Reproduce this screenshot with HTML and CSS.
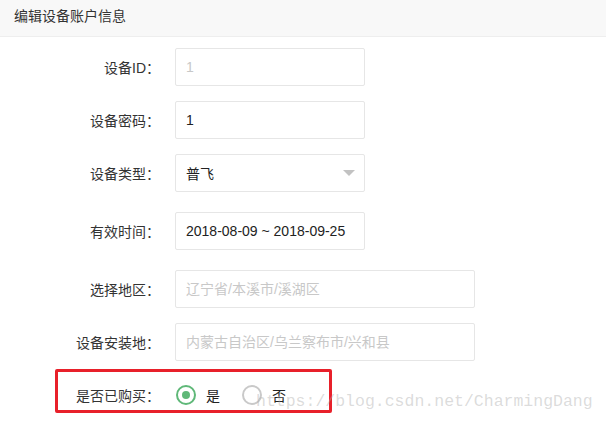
FILE: index.html
```html
<!DOCTYPE html>
<html lang="zh-CN">
<head>
<meta charset="utf-8">
<title>编辑设备账户信息</title>
<link rel="stylesheet" href="styles.css">
</head>
<body>
<div class="page">
  <div class="header">编辑设备账户信息</div>
  <form class="form">
    <div class="item">
      <label class="label">设备ID<span class="colon">：</span></label>
      <div class="field"><input class="input disabled" type="text" value="1" readonly></div>
    </div>
    <div class="item">
      <label class="label">设备密码<span class="colon">：</span></label>
      <div class="field"><input class="input" type="text" value="1"></div>
    </div>
    <div class="item item-lg">
      <label class="label">设备类型<span class="colon">：</span></label>
      <div class="field">
        <div class="input select">
          <span>普飞</span>
          <span class="caret"></span>
        </div>
      </div>
    </div>
    <div class="item item-lg">
      <label class="label">有效时间<span class="colon">：</span></label>
      <div class="field"><input class="input" type="text" value="2018-08-09 ~ 2018-09-25"></div>
    </div>
    <div class="item">
      <label class="label">选择地区<span class="colon">：</span></label>
      <div class="field"><input class="input wide" type="text" placeholder="辽宁省/本溪市/溪湖区"></div>
    </div>
    <div class="item">
      <label class="label">设备安装地<span class="colon">：</span></label>
      <div class="field"><input class="input wide" type="text" placeholder="内蒙古自治区/乌兰察布市/兴和县"></div>
    </div>
    <div class="item item-radio">
      <label class="label">是否已购买<span class="colon">：</span></label>
      <div class="field radios">
        <span class="radio checked"><span class="ring"></span><span class="rtext">是</span></span>
        <span class="radio"><span class="ring"></span><span class="rtext">否</span></span>
      </div>
      <div class="highlight"></div>
    </div>
  </form>
  <div class="watermark">https://blog.csdn.net/CharmingDang</div>
</div>
</body>
</html>
```
FILE: styles.css
```css
html, body {
  margin: 0;
  padding: 0;
  background: #fff;
}
body {
  font-family: "Liberation Sans", "Noto Sans CJK SC", sans-serif;
  font-size: 14px;
  color: #333;
}
.page {
  position: relative;
  width: 606px;
  height: 423px;
  overflow: hidden;
}
.header {
  height: 36px;
  line-height: 32px;
  padding: 0 14px;
  background: #f8f8f8;
  border-bottom: 1px solid #eeeeee;
  color: #333;
}
.form {
  margin: 0;
  padding-top: 11px;
}
.item {
  display: flex;
  align-items: center;
  height: 38px;
  margin-bottom: 15px;
}
.item-lg {
  margin-bottom: 20px;
}
.item-radio {
  position: relative;
}
.label {
  width: 160px;
  text-align: right;
  line-height: 20px;
  color: #333;
}
.colon {
  font-family: "Noto Sans CJK JP", "Noto Sans CJK SC", sans-serif;
}
.field {
  margin-left: 15px;
  display: flex;
  align-items: center;
}
.input {
  box-sizing: border-box;
  width: 190px;
  height: 38px;
  margin: 0;
  padding: 0 10px;
  border: 1px solid #e6e6e6;
  border-radius: 2px;
  background: #fff;
  font-family: "Liberation Sans", "Noto Sans CJK SC", sans-serif;
  font-size: 14px;
  color: #222;
  outline: none;
}
.input.wide {
  width: 300px;
}
.input.disabled {
  color: #c8c8c8;
}
.input::placeholder {
  color: #c8c8c8;
}
.select {
  display: flex;
  align-items: center;
  justify-content: space-between;
  padding-right: 9px;
}
.caret {
  width: 0;
  height: 0;
  border-left: 6px solid transparent;
  border-right: 6px solid transparent;
  border-top: 6px solid #c2c2c2;
}
.radios {
  padding-left: 1px;
}
.radio {
  display: inline-flex;
  align-items: center;
  margin-right: 22px;
}
.ring {
  box-sizing: border-box;
  width: 20px;
  height: 20px;
  border: 2px solid #c9c9c9;
  border-radius: 50%;
  display: flex;
  align-items: center;
  justify-content: center;
}
.radio.checked .ring {
  border-color: #5fb878;
}
.radio.checked .ring::after {
  content: "";
  width: 8px;
  height: 8px;
  border-radius: 50%;
  background: #5fb878;
}
.rtext {
  margin-left: 10px;
  color: #222;
}
.highlight {
  position: absolute;
  left: 55px;
  top: -7px;
  width: 277px;
  height: 44px;
  box-sizing: border-box;
  border: 3px solid #e8202a;
  border-radius: 2px;
  pointer-events: none;
}
.watermark {
  position: absolute;
  left: 256px;
  top: 393px;
  font-family: "Liberation Mono", monospace;
  font-size: 16.5px;
  line-height: 18px;
  color: rgba(170, 170, 170, 0.42);
  white-space: nowrap;
  pointer-events: none;
}
```
